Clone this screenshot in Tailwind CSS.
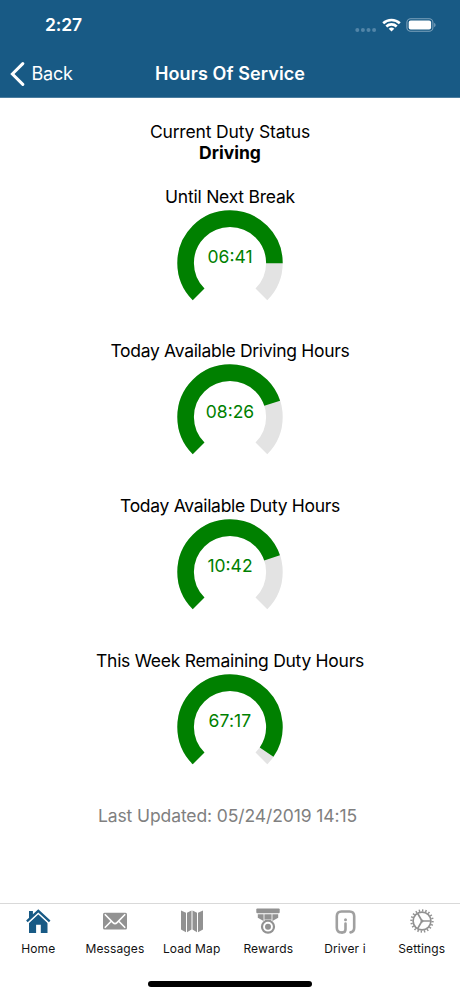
<!DOCTYPE html>
<html lang="en">

<head>
    <meta charset="UTF-8">
    <meta name="viewport" content="width=device-width, initial-scale=1.0">
    <script src="https://cdn.jsdelivr.net/npm/@tailwindcss/browser@4"></script>
    <title>Hours Of Service</title>
</head>

<body class="bg-white font-['Inter',sans-serif]">
    <div class="flex flex-col w-full h-[996px] overflow-hidden">

        <header class="bg-[#185a85] text-white h-[98px] shrink-0 border-b border-[#4b7d9f]">
            <!-- status bar -->
            <div class="flex items-center justify-between h-[50px] pl-[45px] pr-6">
                <span class="text-[17.5px] font-semibold tracking-[-0.1px]">2:27</span>
                <div class="flex items-center">
                    <svg class="w-[22px] h-[14px] mt-1" viewBox="0 0 22 14" fill="#5285a8">
                        <circle cx="2.3" cy="10" r="2" />
                        <circle cx="7.9" cy="10" r="2" />
                        <circle cx="13.5" cy="10" r="2" />
                        <circle cx="19.1" cy="10" r="2" />
                    </svg>
                    <svg class="w-[19px] h-[14px] ml-[5px]" viewBox="0 0 19 14" fill="none" stroke="#fff" stroke-width="2.6">
                        <path d="M1.2 5.3a12 12 0 0 1 16.6 0" />
                        <path d="M4.3 8.5a7.5 7.5 0 0 1 10.4 0" />
                        <path d="M9.5 13.6L6.7 10.8a4 4 0 0 1 5.6 0z" fill="#fff" stroke="none" />
                    </svg>
                    <svg class="w-[30px] h-[14px] ml-[5px]" viewBox="0 0 30 14" fill="none">
                        <rect x="0.9" y="0.7" width="26" height="12.6" rx="3.8" stroke="#7ca2bc" stroke-width="1.1" />
                        <rect x="2.7" y="2.5" width="22.4" height="9" rx="2" fill="#fff" />
                        <path d="M28.2 4.7q1.4.8 1.4 2.3t-1.4 2.3z" fill="#7ca2bc" />
                    </svg>
                </div>
            </div>
            <!-- nav bar -->
            <div class="grid grid-cols-[1fr_auto_1fr] items-center h-[47px]">
                <a href="#" class="flex items-center pl-[10px]">
                    <svg class="w-[15px] h-[24px]" viewBox="0 0 15 24" fill="none" stroke="#fff" stroke-width="3">
                        <path d="M12.8 1.6L2.4 12l10.4 10.4" stroke-linecap="round" />
                    </svg>
                    <span class="ml-[6.5px] text-[18px] tracking-[-0.2px]">Back</span>
                </a>
                <h1 class="text-[18px] font-semibold tracking-[0.1px]">Hours Of Service</h1>
                <span></span>
            </div>
        </header>

        <main class="flex flex-col items-center flex-1 pt-[22.5px] text-[17.5px] leading-[21.5px] tracking-[-0.3px] text-black">
            <p class="tracking-[-0.17px]">Current Duty Status</p>
            <p class="font-bold tracking-[0px]">Driving</p>

            <section class="flex flex-col items-center h-[154.8px] mt-[22px]">
                <h2 class="tracking-[-0.23px]">Until Next Break</h2>
                <div class="grid place-items-center mt-[2.5px]">
                    <svg class="col-start-1 row-start-1 w-[106px] h-[106px]" viewBox="-53 -53 106 106" fill="none" stroke-width="16.6">
                        <circle r="44.4" pathLength="360" stroke="#e3e3e3" stroke-dasharray="270 90" transform="rotate(135)" />
                        <circle r="44.4" pathLength="360" stroke="#008000" stroke-dasharray="225.3 134.7" transform="rotate(135)" />
                    </svg>
                    <span class="col-start-1 row-start-1 mb-[12px] tracking-[0px] text-[#008000]">06:41</span>
                </div>
            </section>

            <section class="flex flex-col items-center h-[154.8px]">
                <h2>Today Available Driving Hours</h2>
                <div class="grid place-items-center mt-[2.5px]">
                    <svg class="col-start-1 row-start-1 w-[106px] h-[106px]" viewBox="-53 -53 106 106" fill="none" stroke-width="16.6">
                        <circle r="44.4" pathLength="360" stroke="#e3e3e3" stroke-dasharray="270 90" transform="rotate(135)" />
                        <circle r="44.4" pathLength="360" stroke="#008000" stroke-dasharray="207 153" transform="rotate(135)" />
                    </svg>
                    <span class="col-start-1 row-start-1 mb-[12px] tracking-[0px] text-[#008000]">08:26</span>
                </div>
            </section>

            <section class="flex flex-col items-center h-[154.8px]">
                <h2>Today Available Duty Hours</h2>
                <div class="grid place-items-center mt-[2.5px]">
                    <svg class="col-start-1 row-start-1 w-[106px] h-[106px]" viewBox="-53 -53 106 106" fill="none" stroke-width="16.6">
                        <circle r="44.4" pathLength="360" stroke="#e3e3e3" stroke-dasharray="270 90" transform="rotate(135)" />
                        <circle r="44.4" pathLength="360" stroke="#008000" stroke-dasharray="206.4 153.6" transform="rotate(135)" />
                    </svg>
                    <span class="col-start-1 row-start-1 mb-[12px] tracking-[0px] text-[#008000]">10:42</span>
                </div>
            </section>

            <section class="flex flex-col items-center h-[154.8px]">
                <h2 class="tracking-[-0.27px]">This Week Remaining Duty Hours</h2>
                <div class="grid place-items-center mt-[2.5px]">
                    <svg class="col-start-1 row-start-1 w-[106px] h-[106px]" viewBox="-53 -53 106 106" fill="none" stroke-width="16.6">
                        <circle r="44.4" pathLength="360" stroke="#e3e3e3" stroke-dasharray="270 90" transform="rotate(135)" />
                        <circle r="44.4" pathLength="360" stroke="#008000" stroke-dasharray="259.5 100.5" transform="rotate(135)" />
                    </svg>
                    <span class="col-start-1 row-start-1 mb-[12px] tracking-[0.1px] text-[#008000]">67:17</span>
                </div>
            </section>

            <p class="text-[#808080] mr-[5px] tracking-[-0.1px]">Last Updated: 05/24/2019 14:15</p>
        </main>

        <footer class="h-[93px] shrink-0 border-t border-[#d9d9d9]">
            <nav class="grid grid-cols-6 h-[76px] pt-[3px] text-[12px] leading-4 tracking-[0.12px] text-[#111]">
                <a href="#" class="flex flex-col items-center gap-[6px]">
                    <svg class="w-7 h-7" viewBox="0 0 28 28" fill="#185a85">
                        <path d="M5 4h3.7v5L5 12z" />
                        <path d="M5 15.6l9.3-8.9 9.2 8.9V26h-6.7v-8.2h-4.7V26H5z" />
                        <path d="M3.400 15.200L14.300 5l10.900 10.200" fill="none" stroke="#fff" stroke-width="3.400" />
                        <path d="M2.900 14.300L14.300 3.900l11.400 10.400" fill="none" stroke="#185a85" stroke-width="2.300" />
                        <path d="M5 4h3.700v4L5 11z" />
                    </svg>
                    <span>Home</span>
                </a>
                <a href="#" class="flex flex-col items-center gap-[6px]">
                    <svg class="w-7 h-7" viewBox="0 0 28 28">
                        <rect x="2" y="5.800" width="24" height="16.700" rx="1.500" fill="#929292" />
                        <path d="M3.800 7.300L12 15.600q2 2 4 0l8.200-8.300M3.800 20.800l6.400-6.600M24.200 20.800l-6.400-6.600" fill="none" stroke="#fff" stroke-width="1.600" />
                    </svg>
                    <span>Messages</span>
                </a>
                <a href="#" class="flex flex-col items-center gap-[6px]">
                    <svg class="w-7 h-7" viewBox="0 0 28 28" fill="#929292">
                        <path d="M3 3.400l5 2.400v19.400l-5-2.600zM9 5.800l4.500-2.400v19.200L9 25.200zM14.500 3.400l4.500 2.400v19.400l-4.500-2.600zM20 5.800l5-2.400v19.200l-5 2.600z" />
                    </svg>
                    <span>Load Map</span>
                </a>
                <a href="#" class="flex flex-col items-center gap-[6px]">
                    <svg class="w-7 h-7" viewBox="0 0 28 28" fill="#929292">
                        <rect x="2.300" y="1.500" width="23.400" height="4.700" rx="1" />
                        <path d="M3.800 7.200h5.800v6.700L3.800 10.800zM10.400 7.200h7.200v5.600q-3.600-1.200-7.200 0zM18.400 7.200h5.800v3.600l-5.800 3.100z" />
                        <circle cx="14" cy="19.700" r="6" fill="none" stroke="#929292" stroke-width="2.200" />
                        <circle cx="14" cy="19.700" r="3" />
                    </svg>
                    <span>Rewards</span>
                </a>
                <a href="#" class="flex flex-col items-center gap-[6px]">
                    <svg class="w-7 h-7" viewBox="0 0 28 28" fill="none" stroke="#a0a0a0" stroke-width="2.600" stroke-linecap="round">
                        <path d="M11 25.500H10.500q-4.700 0-4.700-4.700V9.200q0-4.700 4.700-4.700h8q4.700 0 4.700 4.700v11.600q0 4-3.700 4.600" />
                        <path d="M14.500 16.600v5.600q0 3.300-3.300 3.300" />
                        <circle cx="14.500" cy="12.700" r="1.500" fill="#a0a0a0" stroke="none" />
                    </svg>
                    <span>Driver i</span>
                </a>
                <a href="#" class="flex flex-col items-center gap-[6px]">
                    <svg class="w-7 h-7" viewBox="-14 -14 28 28" fill="none" stroke="#929292">
                        <circle r="8.900" stroke-width="1.700" />
                        <circle r="10.600" stroke-width="2.200" pathLength="80" stroke-dasharray="1.700 2.300" />
                        <path d="M0 0h8.500M0 0l-4.300-7.500M0 0l-4.300 7.500" stroke-width="1.600" />
                        <circle r="1.500" fill="#929292" stroke="none" />
                    </svg>
                    <span>Settings</span>
                </a>
            </nav>
            <div class="w-[164px] h-[5.5px] mx-auto mt-[1px] rounded-full bg-black"></div>
        </footer>
    </div>
</body>

</html>
